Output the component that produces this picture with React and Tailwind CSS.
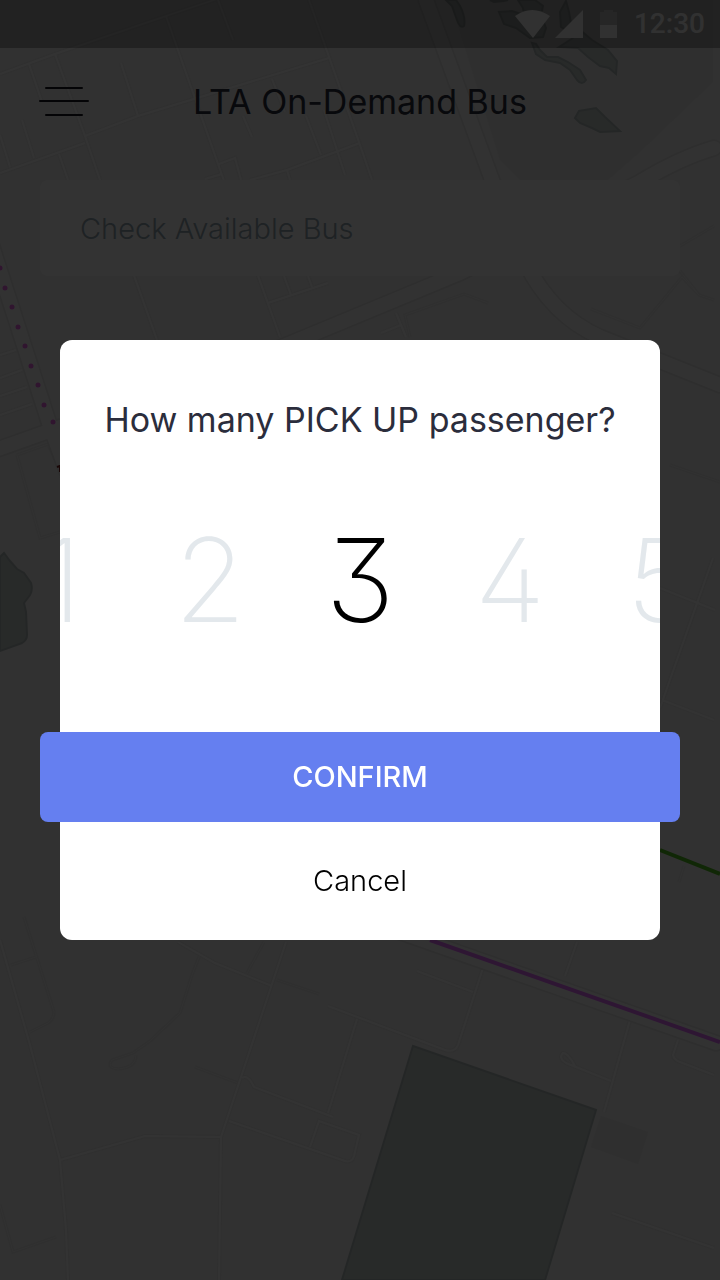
import React, { useState } from 'react'

const counts = [1, 2, 3, 4, 5]

const streets = [
  'M0 74 L55 54 L166 16 L220 -2',
  'M29 64 L42 102',
  'M55 54 L85 136 L100 180 L157 340',
  'M121 63 L138 116',
  'M85 136 L138 116 L329 58',
  'M166 16 L192 90 L223 178 L280 337',
  'M218 0 L233 40',
  'M309 0 L360 145 L372 180',
  'M0 173 L85 143',
  'M22 120 L34 158 M0 135 L10 167 M59 154 L68 180',
  'M205 179 L222 174 M219 164 L235 158 L241 180',
  'M250 180 L287 170 L360 143 M287 170 L290 180',
  'M272 79 L285 112 M306 116 L321 155 M324 110 L345 175 M243 116 L252 137',
  'M268 303 L328 283 M284 276 L291 295 M308 276 L312 287',
  'M396 313 L406 337 M381 333 L401 325',
  'M0 355 L16 350 M0 378 L22 370 M0 396 L27 387 M0 415 L32 404',
  'M660 588 L715 610 M713 558 L660 708 M662 700 L714 720',
  'M417 971 L473 992',
  'M483 968 L458 1045 Q455 1053 445 1050 L328 1006',
  'M577 942 L565 976',
  'M630 1020 L604 1112',
  'M611 1081 L566 1063 Q558 1058 563 1053 Q568 1053 575 1066',
  'M678 1040 L673 1055 Q674 1060 680 1062 L714 1075',
  'M612 1213 L714 1248',
  'M0 940 L30 1045 L60 1160 L66 1230 L68 1280',
  'M60 1160 L145 1136 L221 1137 L219 1280',
  'M221 1137 L286 942',
  'M178 942 L215 963 L272 986',
  'M242 1078 Q248 1074 254 1087 L333 1117',
  'M357 1019 L328 1113',
  'M229 1121 L345 1161 Q352 1163 354 1156 L359 1135 L319 1121 L310 1147',
]

const paths = [
  'M24 917 L54 1012 Q54 1019 48 1023 L30 1032 M11 965 L36 957',
  'M199 957 L192 975 L180 1013 L150 1041 L133 1053 L112 1060 Q106 1068 118 1069 Q136 1068 136 1055',
  'M195 1067 L238 1083 M277 980 L319 994 M264 942 L247 973',
  'M17 455 L48 444 L60 470 M17 455 L40 538 L60 532',
  'M0 1205 L13 1252 L56 1237',
  'M410 337 L405 315 L464 294 L488 303 M591 309 L640 328 L682 277 L699 295 L714 300 M680 271 L699 295 M680 246 L714 226',
  'M670 465 L720 482 M684 866 L679 882',
]

const lakes = [
  'M446 0 L452 6 L457 20 Q460 29 464 26 Q466 18 460 6 L456 0 Z',
  'M490 0 L494 2 L504 1 L508 0 Z',
  'M518 0 L523 8 L524 15 L512 11 L499 12 L504 24 L516 28 L530 38 L543 37 L546 28 L541 15 L543 6 L535 0 Z',
  'M532 43 L536 54 L545 60 L560 63 L570 70 L577 80 Q582 86 586 80 L580 70 L568 62 L558 57 L547 57 L540 50 L536 44 Z',
  'M559 47 L573 38 L580 30 L592 40 L608 50 L617 61 L616 74 L609 68 L600 66 L588 57 L578 48 Z',
  'M566 1 L560 12 L561 27 L573 34 L569 12 Z',
  'M575 118 L579 111 L596 108 L605 117 L620 131 L600 132 L592 128 L580 123 Z',
  'M0 557 L4 553 L10 561 L17 569 L24 573 L31 583 Q33 590 30 595 L24 603 L26 612 L27 635 Q27 640 22 643 L0 651 Z',
  'M413 1046 L596 1110 L545 1280 L342 1280 Z',
]

const wideRoads = 'M426 0 L492 180 L525 262 Q552 316 600 337 L720 385 M250 360 L460 273 L640 182 Q680 158 714 148 M-8 246 L50 426 L70 480 M-10 452 L80 420 M360 918 L716 1043'

const stops = [[0, 268], [5, 288], [12, 307], [18, 327], [25, 346], [31, 366], [38, 385], [44, 405], [53, 422]]

function MapBackground() {
  return (
    <svg
      className="absolute inset-0 w-full h-full"
      viewBox="0 0 720 1280"
      preserveAspectRatio="xMidYMid slice"
      fill="none"
      aria-hidden="true"
    >
      <rect width="720" height="1280" fill="#f2f2f2" />
      <path d="M450 0 L475 80 L500 160 L520 180 L608 180 L640 152 L713 82 L713 0 Z" fill="#ebebeb" />
      <path d="M601 1116 L648 1132 L638 1164 L591 1147 Z" fill="#e8e8e8" />
      {paths.map((d) => <path key={d} d={d} stroke="#e9e9e9" strokeWidth="3" />)}
      {paths.map((d) => <path key={d} d={d} stroke="#f5f5f5" strokeWidth="1" />)}
      {streets.map((d) => <path key={d} d={d} stroke="#ebebeb" strokeWidth="4" />)}
      {streets.map((d) => <path key={d} d={d} stroke="#ffffff" strokeWidth="2" />)}
      <path d={wideRoads} stroke="#e3e3e3" strokeWidth="17" strokeLinecap="round" />
      <path d={wideRoads} stroke="#fbfbfb" strokeWidth="14" strokeLinecap="round" />
      {lakes.map((d) => <path key={d} d={d} fill="#c8d0ce" stroke="#b4bebc" strokeWidth="2" />)}

      {/* Bus lines */}
      {stops.map(([x, y]) => <circle key={y} cx={x} cy={y} r="2.5" fill="#f068ea" />)}
      <path d="M430 940 L720 1042" stroke="#e670ff" strokeWidth="4" />
      <path d="M660 850 L720 874" stroke="#50c020" strokeWidth="4" />
      <path d="M57 467 L60 466 V472" stroke="#7a2020" strokeWidth="2" />
    </svg>
  )
}

function StatusBar() {
  return (
    <div className="relative h-12 flex items-center justify-end pr-[15px] bg-black/30 text-[#f5f5f5]">
      <svg className="w-[104px] h-7 mr-[15px]" viewBox="0 0 104 28" fill="currentColor" aria-hidden="true">
        <path d="M0 6 Q17 -6 35 6 L18 28 Z" />
        <path d="M40 28 L68 0 L68 28 Z" />
        <path d="M85 2 H89 V0 H98 V2 H102 V15 H85 Z" fillOpacity="0.3" />
        <path d="M85 15 H102 V28 H85 Z" />
      </svg>
      <span className="font-['Roboto',sans-serif] font-medium text-[28px] leading-8">12:30</span>
    </div>
  )
}

function App() {
  const [selected, setSelected] = useState(3)

  return (
    <div className="relative min-h-screen overflow-hidden font-['Inter',sans-serif]">
      <MapBackground />
      <StatusBar />

      <header className="relative h-[108px] px-[39px] grid grid-cols-[50px_1fr_50px] items-center">
        <button aria-label="Menu" className="text-[#14141e]">
          <svg className="w-[50px] h-[30px]" viewBox="0 0 50 30" stroke="currentColor" strokeWidth="2" strokeLinecap="round" aria-hidden="true">
            <path d="M7 1 H43 M1 14 H49 M7 28 H43" />
          </svg>
        </button>
        <h1 className="text-center whitespace-nowrap text-[34px] leading-10 text-[#2b2d3c]">LTA On-Demand Bus</h1>
      </header>

      <div className="relative px-10 pt-6">
        <input
          aria-label="Check Available Bus"
          placeholder="Check Available Bus"
          className="w-full h-24 px-10 rounded-lg bg-white font-light text-[29px] placeholder:text-[#96a8b4]"
        />
      </div>

      {/* Passenger dialog */}
      <div className="fixed inset-0 bg-black/80 flex items-center px-[60px]">
        <div role="dialog" aria-modal="true" aria-labelledby="passenger-title" className="w-full bg-white rounded-xl pt-[60px]">
          <h2 id="passenger-title" className="text-center text-[34px] leading-10 text-[#2b2d3c]">
            How many PICK UP passenger?
          </h2>

          <div className="mt-[60px] mb-[72px] flex justify-center overflow-hidden">
            {counts.map((count) => (
              <button
                key={count}
                onClick={() => setSelected(count)}
                aria-pressed={count === selected}
                className={`w-[150px] h-40 shrink-0 text-[116px] leading-[160px] font-extralight [font-feature-settings:'cv02','cv09'] ${
                  count === selected ? 'text-black' : 'text-[#e3e8ec]'
                }`}
              >
                {count}
              </button>
            ))}
          </div>

          <div className="-mx-5">
            <button className="w-full h-[90px] rounded-lg bg-[#657ff0] text-white font-medium text-[29px]">
              CONFIRM
            </button>
          </div>
          <button className="w-full h-[118px] font-light text-[29px] text-black">Cancel</button>
        </div>
      </div>
    </div>
  )
}

export default App
